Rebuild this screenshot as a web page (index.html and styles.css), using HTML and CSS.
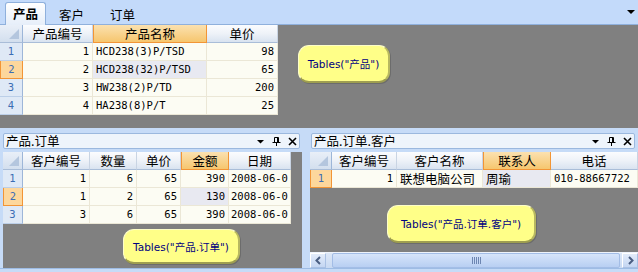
FILE: index.html
```html
<!DOCTYPE html>
<html lang="zh-CN">
<head>
<meta charset="utf-8">
<title>Tables</title>
<link rel="stylesheet" href="styles.css">
</head>
<body>
<div class="app">
  <div class="tabstrip">
    <div class="tab active">产品</div>
    <div class="tab">客户</div>
    <div class="tab">订单</div>
    <div class="tab-menu"></div>
  </div>

  <div class="topview">
    <table class="grid grid-top">
      <colgroup><col class="w23"><col class="w70"><col class="w114"><col class="w71"></colgroup>
      <thead>
        <tr><th class="corner"></th><th>产品编号</th><th class="sel">产品名称</th><th>单价</th></tr>
      </thead>
      <tbody>
        <tr><td class="rh">1</td><td class="num">1</td><td class="txt">HCD238(3)P/TSD</td><td class="num">98</td></tr>
        <tr><td class="rh cur">2</td><td class="num">2</td><td class="txt focus">HCD238(32)P/TSD</td><td class="num">65</td></tr>
        <tr><td class="rh">3</td><td class="num">3</td><td class="txt">HW238(2)P/TD</td><td class="num">200</td></tr>
        <tr><td class="rh">4</td><td class="num">4</td><td class="txt">HA238(8)P/T</td><td class="num">25</td></tr>
      </tbody>
    </table>
    <div class="callout callout-top">Tables("产品")</div>
  </div>

  <div class="bottom">
    <section class="panel panel-left">
      <div class="caption">
        <span class="caption-title">产品.订单</span>
        <span class="caption-btns">
          <svg width="9" height="9" viewBox="0 0 9 9"><path d="M1 3h7L4.5 6.5z" fill="#000"/></svg>
          <svg width="9" height="9" viewBox="0 0 9 9"><path d="M2.5 0.5h4v4.5M2.5 0.5v4.5M5.5 0.5v4.5M0.5 5.5h8M4.5 5.5v3.5" stroke="#000" fill="none"/></svg>
          <svg width="9" height="9" viewBox="0 0 9 9"><path d="M1 1l7 7M8 1l-7 7" stroke="#000" stroke-width="1.6"/></svg>
        </span>
      </div>
      <div class="view">
        <table class="grid grid-left">
          <colgroup><col class="w20"><col class="w67"><col class="w47"><col class="w44"><col class="w48"><col class="w62"></colgroup>
          <thead>
            <tr><th class="corner"></th><th>客户编号</th><th>数量</th><th>单价</th><th class="sel">金额</th><th>日期</th></tr>
          </thead>
          <tbody>
            <tr><td class="rh">1</td><td class="num">1</td><td class="num">6</td><td class="num">65</td><td class="num">390</td><td class="txt date">2008-06-0</td></tr>
            <tr><td class="rh cur">2</td><td class="num">1</td><td class="num">2</td><td class="num">65</td><td class="num focus">130</td><td class="txt date">2008-06-0</td></tr>
            <tr><td class="rh">3</td><td class="num">3</td><td class="num">6</td><td class="num">65</td><td class="num">390</td><td class="txt date">2008-06-0</td></tr>
          </tbody>
        </table>
        <div class="callout callout-left">Tables("产品.订单")</div>
      </div>
    </section>

    <section class="panel panel-right">
      <div class="caption">
        <span class="caption-title">产品.订单.客户</span>
        <span class="caption-btns">
          <svg width="9" height="9" viewBox="0 0 9 9"><path d="M1 3h7L4.5 6.5z" fill="#000"/></svg>
          <svg width="9" height="9" viewBox="0 0 9 9"><path d="M2.5 0.5h4v4.5M2.5 0.5v4.5M5.5 0.5v4.5M0.5 5.5h8M4.5 5.5v3.5" stroke="#000" fill="none"/></svg>
          <svg width="9" height="9" viewBox="0 0 9 9"><path d="M1 1l7 7M8 1l-7 7" stroke="#000" stroke-width="1.6"/></svg>
        </span>
      </div>
      <div class="view view-scroll">
        <table class="grid grid-right">
          <colgroup><col class="w22"><col class="w65"><col class="w86"><col class="w68"><col class="w87"></colgroup>
          <thead>
            <tr><th class="corner"></th><th>客户编号</th><th>客户名称</th><th class="sel">联系人</th><th>电话</th></tr>
          </thead>
          <tbody>
            <tr><td class="rh cur">1</td><td class="num">1</td><td class="txt cjk">联想电脑公司</td><td class="txt cjk focus">周瑜</td><td class="txt">010-88667722</td></tr>
          </tbody>
        </table>
        <div class="callout callout-right">Tables("产品.订单.客户")</div>
        <div class="hscroll">
          <div class="sb-btn"><svg width="9" height="9" viewBox="0 0 9 9"><path d="M6 1L2.5 4.5 6 8" stroke="#4a5e82" stroke-width="2" fill="none"/></svg></div>
          <div class="sb-track"><div class="sb-thumb"><span class="grip"></span></div></div>
          <div class="sb-btn"><svg width="9" height="9" viewBox="0 0 9 9"><path d="M3 1l3.5 3.5L3 8" stroke="#4a5e82" stroke-width="2" fill="none"/></svg></div>
        </div>
      </div>
    </section>
  </div>
</div>
</body>
</html>
```

FILE: styles.css
```css
* { box-sizing: border-box; }
html, body { margin: 0; padding: 0; }
body {
  width: 638px;
  height: 272px;
  overflow: hidden;
  background: #c6dbf7;
  font-family: "Noto Sans CJK SC", "DejaVu Sans", sans-serif;
  font-size: 12px;
  color: #000;
}
.app { width: 638px; height: 272px; display: flex; flex-direction: column; }

/* tab strip */
.tabstrip {
  height: 25px;
  flex: none;
  display: flex;
  align-items: flex-end;
  padding-left: 5px;
  background: #c3dafa;
  border-bottom: 1px solid #8fb0dc;
  position: relative;
}
.tab {
  height: 22px;
  line-height: 21px;
  padding: 0 12px;
  margin-bottom: -1px;
  border: 1px solid transparent;
  border-bottom: none;
  font-size: 12.5px;
}
.tab.active {
  padding: 0 7px;
  font-weight: bold;
  background: linear-gradient(#ffffff, #e6eef9);
  border-color: #8fb0dc;
  border-radius: 3px 3px 0 0;
  height: 23px;
}
.tab-menu {
  position: absolute;
  right: 3px;
  top: 10px;
  width: 0; height: 0;
  border-left: 4px solid transparent;
  border-right: 4px solid transparent;
  border-top: 4px solid #000;
}

/* top view */
.topview {
  height: 103px;
  flex: none;
  background: #808080;
  position: relative;
}

/* grids */
.grid {
  table-layout: fixed;
  border-collapse: separate;
  border-spacing: 0;
  background: #fcfcf3;
}
.grid-top { width: 278px; }
.grid-left { width: 288px; }
.grid-right { width: 328px; }
.w20 { width: 20px; } .w22 { width: 22px; } .w23 { width: 23px; }
.w44 { width: 44px; } .w47 { width: 47px; } .w48 { width: 48px; }
.w62 { width: 62px; } .w65 { width: 65px; } .w67 { width: 67px; }
.w68 { width: 68px; } .w70 { width: 70px; } .w71 { width: 71px; }
.w86 { width: 86px; } .w87 { width: 87px; } .w114 { width: 114px; }

.grid th {
  height: 18px;
  padding: 0;
  font-weight: normal;
  font-size: 12.5px;
  line-height: 17px;
  text-align: center;
  background: linear-gradient(#fbfcfe 0%, #eef2f8 50%, #d9e3f0 100%);
  border-right: 1px solid #c9d4e3;
  border-bottom: 1px solid #a9bdd8;
  white-space: nowrap;
  overflow: hidden;
}
.grid th.sel {
  background: linear-gradient(#fbe1b0, #f6c66e);
  border: 1px solid #f29536;
  border-top: none;
}
.grid th.corner {
  position: relative;
  background: linear-gradient(#e9eff8, #d3dfee);
  border-right: 1px solid #9db6d8;
}
.grid th.corner::after {
  content: "";
  position: absolute;
  right: 3px;
  bottom: 3px;
  width: 0; height: 0;
  border-left: 10px solid transparent;
  border-bottom: 10px solid #b4c6de;
}
.grid td {
  height: 18px;
  padding: 0 3px;
  line-height: 17px;
  border-right: 1px solid #ebe7d6;
  border-bottom: 1px solid #ebe7d6;
  white-space: nowrap;
  overflow: hidden;
  font-family: "DejaVu Sans Mono", "Noto Sans CJK SC", monospace;
  font-size: 10.5px;
}
.grid td.num { text-align: right; }
.grid td.txt { text-align: left; }
.grid td.date { padding-left: 2px; padding-right: 0; }
.grid td.cjk { font-family: "Noto Sans CJK SC", sans-serif; font-size: 12.5px; }
.grid td.focus { background: #e8e9f1; }
.grid td.rh {
  text-align: center;
  color: #3b6db4;
  background: #dfe9f6;
  border-right: 1px solid #9db6d8;
  border-bottom: 1px solid #bccfe8;
  padding: 0;
}
.grid td.rh.cur {
  background: #fdd79c;
  border: 1px solid #f29536;
  border-top: none;
}

/* callouts */
.callout {
  position: absolute;
  display: flex;
  align-items: center;
  justify-content: center;
  background: #ffff88;
  color: #000080;
  font-family: "DejaVu Sans", "Noto Sans CJK SC", sans-serif;
  font-size: 10.5px;
  border-radius: 11px;
  border-top: 1px solid #fdfdc8;
  border-left: 1px solid #fdfdc8;
  border-right: 2px solid #b8b860;
  border-bottom: 2px solid #9e9e50;
  box-shadow: 1px 1px 0 #6c6c6c;
}
.callout-top { left: 298px; top: 20px; width: 92px; height: 38px; }
.callout-left { left: 120px; top: 77px; width: 117px; height: 35px; }
.callout-right { left: 77px; top: 53px; width: 149px; height: 38px; }

/* bottom panels */
.bottom {
  flex: 1;
  display: flex;
  padding: 5px 0 0 3px;
  gap: 8px;
  border-bottom: 3px solid #c6dbf7;
  box-shadow: inset 0 -4px 0 -3px #9ebce4;
}
.panel { display: flex; flex-direction: column; }
.panel-left { width: 299px; }
.panel-right { flex: 1; }
.caption {
  height: 16px;
  flex: none;
  display: flex;
  align-items: center;
  justify-content: space-between;
  background: #eef4fb;
  border: 1px solid #9bb8de;
  border-radius: 2px;
  padding: 0 2px 0 2px;
  font-size: 12.5px;
  line-height: 14px;
}
.panel-left .caption { margin-right: 2px; }
.panel-right .caption { margin: 0 3px 0 1px; }
.caption-btns { display: flex; gap: 7px; align-items: center; }
.caption-btns svg { display: block; }
.view {
  margin-top: 3px;
  height: 116px;
  background: #808080;
  position: relative;
  display: flex;
  flex-direction: column;
}
.view-scroll .hscroll { margin-top: auto; }

/* scrollbar */
.hscroll {
  height: 16px;
  flex: none;
  display: flex;
  background: linear-gradient(#dde8f8, #c8d9f2);
  border-top: 1px solid #eef3fb;
}
.sb-btn {
  width: 16px;
  flex: none;
  display: flex;
  align-items: center;
  justify-content: center;
  background: linear-gradient(#e3ecfa, #c4d6f2);
  border: 1px solid #ffffff;
  border-right-color: #a9c0e3;
  border-bottom-color: #a9c0e3;
}
.sb-track { flex: 1; padding: 0 2px 0 6px; display: flex; }
.sb-thumb {
  flex: 1;
  display: flex;
  align-items: center;
  justify-content: center;
  background: linear-gradient(#d6e4fa, #b8cff2);
  border: 1px solid #a3bde6;
  border-radius: 2px;
}
.grip {
  width: 9px;
  height: 7px;
  background: repeating-linear-gradient(90deg, #6d86b2 0 1px, transparent 1px 2px);
}
```
